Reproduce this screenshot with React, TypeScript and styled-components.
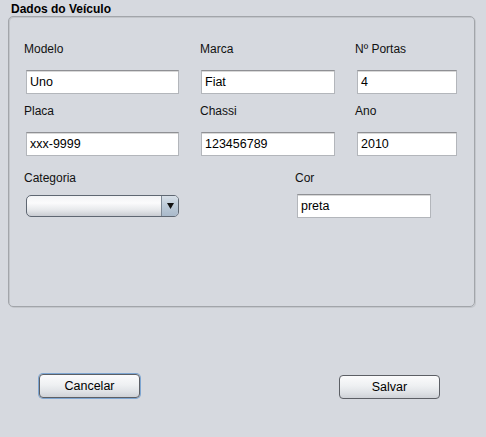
import React from "react";
import styled, { createGlobalStyle } from "styled-components";

const Global = createGlobalStyle`
  html, body { margin: 0; padding: 0; background: #d6d9df; }
  body { font-family: "Liberation Sans", Arial, sans-serif; font-size: 12px; color: #000; }
`;

const Page = styled.div`
  width: 486px;
  height: 437px;
  background: #d6d9df;
  display: flex;
  flex-direction: column;
  box-sizing: border-box;
`;

const Title = styled.div`
  font-weight: bold;
  font-size: 12px;
  line-height: 14px;
  height: 16px;
  padding-left: 11px;
  padding-top: 2px;
  box-sizing: border-box;
`;

const Panel = styled.div`
  margin: 0 11px 0 8px;
  height: 291px;
  box-sizing: border-box;
  border: 1px solid #a2a5aa;
  border-radius: 5px;
  box-shadow: inset 1px 1px 0 #c2c5ca, 1px 1px 0 #c4c7cc;
  display: flex;
  flex-direction: column;
  padding: 25px 0 0 15px;
`;

const Row = styled.div<{ $cols: string; $mt: number }>`
  display: grid;
  grid-template-columns: ${(p) => p.$cols};
  margin-top: ${(p) => p.$mt}px;
`;

const Cell = styled.div`
  display: flex;
  flex-direction: column;
`;

const Label = styled.div<{ $gap: number }>`
  line-height: 14px;
  height: 14px;
  margin-bottom: ${(p) => p.$gap}px;
  color: #111;
`;

const Field = styled.div<{ $w: number; $h?: number; $ml?: number }>`
  width: ${(p) => p.$w}px;
  height: ${(p) => p.$h ?? 24}px;
  margin-left: ${(p) => p.$ml ?? 2}px;
  box-sizing: border-box;
  background: #fff;
  border: 1px solid #b3b6bb;
  border-top-color: #8f9094;
  box-shadow: inset 0 1px 0 #d8d8d8;
  padding: 0 0 0 3px;
  display: flex;
  align-items: center;
  font-size: 12.5px;
  color: #000;
`;

const Combo = styled.div`
  width: 153px;
  height: 22px;
  margin-left: 2px;
  box-sizing: border-box;
  border: 1px solid #5f6772;
  border-radius: 5px;
  background: linear-gradient(#f3f4f6, #fbfbfc 35%, #e6e8eb 70%, #c9ccd2);
  display: flex;
  justify-content: flex-end;
  overflow: hidden;
`;

const ComboArrow = styled.div`
  width: 16px;
  height: 100%;
  border-left: 1px solid #7d8894;
  background: linear-gradient(#d8e0e8, #bccad8 50%, #a9b9ca);
  display: flex;
  align-items: center;
  justify-content: center;
`;

const Buttons = styled.div`
  margin-top: 67px;
  display: flex;
  justify-content: space-between;
  padding: 0 46px 0 39px;
`;

const Button = styled.div<{ $focus?: boolean }>`
  width: 101px;
  height: 24px;
  box-sizing: border-box;
  border: 1px solid #5c5f65;
  border-radius: 4px;
  background: linear-gradient(#fbfbfc, #eef0f2 45%, #dfe2e6 75%, #cfd2d7);
  display: flex;
  align-items: center;
  justify-content: center;
  font-size: 12.5px;
  color: #000;
  margin-top: ${(p) => (p.$focus ? 0 : 1)}px;
  box-shadow: ${(p) => (p.$focus ? "0 0 0 1px #7ea6d2" : "none")};
`;

export default function App() {
  return (
    <Page>
      <Global />
      <Title>Dados do Veículo</Title>
      <Panel>
        <Row $cols="176px 155px 1fr" $mt={0}>
          <Cell>
            <Label $gap={14}>Modelo</Label>
            <Field $w={153}>Uno</Field>
          </Cell>
          <Cell>
            <Label $gap={14}>Marca</Label>
            <Field $w={134} $ml={1}>Fiat</Field>
          </Cell>
          <Cell>
            <Label $gap={14}>Nº Portas</Label>
            <Field $w={100}>4</Field>
          </Cell>
        </Row>
        <Row $cols="176px 155px 1fr" $mt={10}>
          <Cell>
            <Label $gap={14}>Placa</Label>
            <Field $w={153}>xxx-9999</Field>
          </Cell>
          <Cell>
            <Label $gap={14}>Chassi</Label>
            <Field $w={134} $ml={1}>123456789</Field>
          </Cell>
          <Cell>
            <Label $gap={14}>Ano</Label>
            <Field $w={100}>2010</Field>
          </Cell>
        </Row>
        <Row $cols="271px 1fr" $mt={15}>
          <Cell>
            <Label $gap={10}>Categoria</Label>
            <Combo>
              <ComboArrow>
                <svg width="7" height="6" viewBox="0 0 7 6">
                  <path d="M0 0 H7 L3.5 6 Z" fill="#111" />
                </svg>
              </ComboArrow>
            </Combo>
          </Cell>
          <Cell>
            <Label $gap={9}>Cor</Label>
            <Field $w={134}>preta</Field>
          </Cell>
        </Row>
      </Panel>
      <Buttons>
        <Button $focus>Cancelar</Button>
        <Button>Salvar</Button>
      </Buttons>
    </Page>
  );
}
